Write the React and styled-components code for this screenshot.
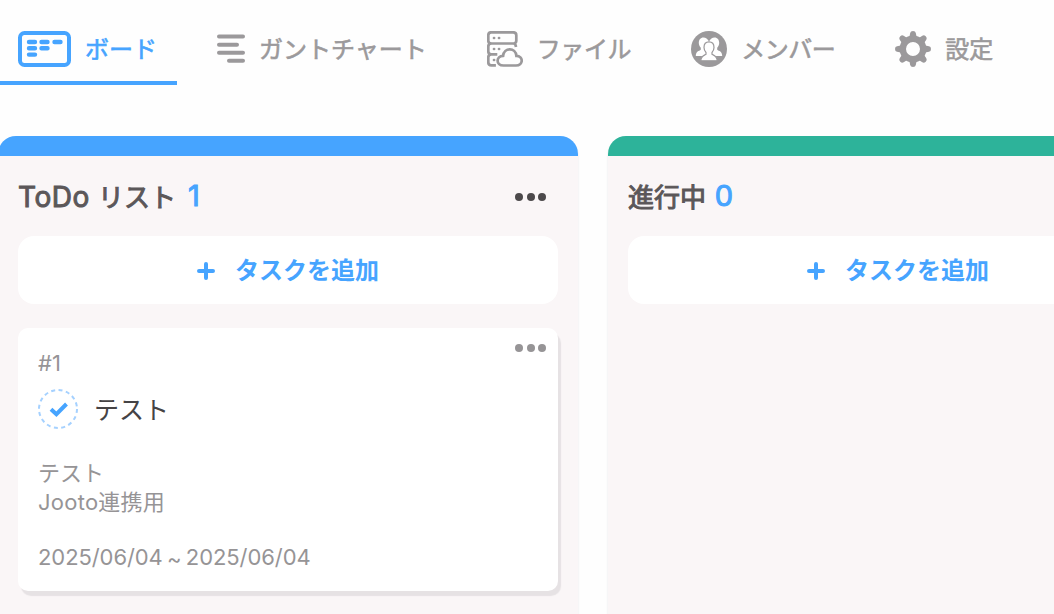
import React from 'react';
import styled, { createGlobalStyle } from 'styled-components';

const GlobalStyle = createGlobalStyle`
  * {
    box-sizing: border-box;
  }

  body {
    margin: 0;
    background: #fefefe;
    color: #5b5759;
    font-family: Inter, 'Noto Sans CJK JP', sans-serif;
    overflow: hidden;
  }

  svg {
    display: block;
    flex: none;
  }
`;

const Page = styled.div`
  width: 100%;
  height: 614px;
  overflow: hidden;
`;

const Tabs = styled.nav`
  display: flex;
  gap: 20px;
  height: 85px;
`;

const Tab = styled.a`
  display: flex;
  align-items: center;
  flex: none;
  gap: 14px;
  height: 85px;
  padding: 17px 20px 0 ${props => (props.$active ? '18px' : '20px')};
  border-bottom: 4px solid ${props => (props.$active ? '#46a4ff' : 'transparent')};
  color: ${props => (props.$active ? '#46a4ff' : '#9b999b')};
`;

const TabLabel = styled.span`
  padding-top: 1px;
  font-size: 24px;
  line-height: 36px;
  -webkit-text-stroke: 0.6px currentColor;
  white-space: nowrap;
  letter-spacing: ${props => props.$spacing || '0'};
`;

const Board = styled.main`
  display: flex;
  gap: 30px;
  margin: 51px 0 0 -2px;
`;

const Column = styled.section`
  flex: none;
  width: 580px;
  height: 500px;
  border-top: 20px solid ${props => props.$color};
  border-radius: 18px 18px 0 0;
  background: #faf6f7;
  box-shadow: 0 2px 2px rgba(60, 50, 80, 0.16);
  padding: 0 20px;
`;

const ColumnHeader = styled.header`
  display: flex;
  align-items: center;
  height: 80px;
  padding: 2px 12px 0 0;
`;

const ColumnTitle = styled.h2`
  margin: 1px 0 0;
  font-size: 26px;
  line-height: 36px;
  font-weight: 400;
  -webkit-text-stroke: 1px currentColor;
  white-space: pre;
`;

const TitleLatin = styled.span`
  margin-right: 1px;
  font-size: 28px;
  letter-spacing: 0.5px;
`;

const Count = styled.span`
  min-width: 20px;
  margin: -2px 0 0 8px;
  font-size: 29px;
  line-height: 36px;
  text-align: center;
  color: #46a4ff;
  -webkit-text-stroke: 1px currentColor;
`;

const Menu = styled.button`
  display: flex;
  gap: 3.5px;
  margin-left: auto;
  padding: 0;
  border: none;
  background: none;
  color: ${props => props.$color};
`;

const Dot = styled.span`
  width: 8px;
  height: 8px;
  border-radius: 50%;
  background: currentColor;
`;

const AddButton = styled.button`
  display: flex;
  align-items: center;
  justify-content: center;
  gap: 20px;
  width: 540px;
  height: 68px;
  padding: 0;
  border: none;
  border-radius: 16px;
  background: #fff;
  color: #46a4ff;
  font-family: inherit;
  font-size: 24px;
  font-weight: 700;

  svg {
    margin-top: 2px;
  }
`;

const AddLabel = styled.span`
  padding-bottom: 3px;
`;

const Card = styled.article`
  width: 540px;
  height: 263px;
  margin-top: 24px;
  padding: 16px 12px 0 20px;
  border-radius: 10px;
  background: #fff;
  box-shadow: 3px 5px 1px #e6e2e4;
  color: #969496;
  font-size: 22px;
`;

const CardTop = styled.div`
  display: flex;
  align-items: flex-start;
  height: 45px;
`;

const CardNumber = styled.span`
  margin-top: 4px;
  line-height: 30px;
`;

const CardTitle = styled.h3`
  display: flex;
  align-items: center;
  gap: 16px;
  height: 40px;
  margin: 0;
  color: #454345;
  font-size: 25px;
  font-weight: 400;
`;

const CardTitleLabel = styled.span`
  padding-bottom: 3px;
`;

const CardText = styled.p`
  margin: 30px 0 0;
  line-height: 29px;
`;

const ProjectName = styled.span`
  letter-spacing: 0.25px;
`;

const CardDates = styled.p`
  margin: 25px 0 0;
  line-height: 30px;
  letter-spacing: -0.08px;
  word-spacing: -1.8px;
`;

const Tilde = styled.span`
  vertical-align: -2px;
  line-height: 1;
`;

const BoardIcon = () => (
  <svg width="53" height="36" viewBox="0 0 53 36" fill="none" stroke="currentColor">
    <rect x="2" y="2" width="49" height="32" rx="4.5" strokeWidth="4" />
    <path
      d="M11 11h6M23.5 11h6M36.5 11h6M11 17.3h6M23.5 17.3h6M11 23.6h6"
      strokeWidth="4.4"
      strokeLinecap="round"
    />
  </svg>
);

const GanttIcon = () => (
  <svg width="28" height="36" viewBox="0 0 28 36" fill="none" stroke="currentColor">
    <path d="M2 5.5h24M2 13.7h18M2 21.7h24M12 29.8h14" strokeWidth="4" strokeLinecap="round" />
  </svg>
);

const FileIcon = () => (
  <svg width="36" height="36" viewBox="0 0 36 36" fill="none" stroke="currentColor" strokeWidth="2.7">
    <path d="M29 16C28.8 14 28.4 13 27 12.5c1.400-.4 2.300-1.300 2.300-2.800V4.300c0-2-1-3-3-3H4.300c-2 0-3 1-3 3v5.400c0 1.800 1 2.800 3 2.800H27" />
    <path d="M4.300 12.500c-2 0-3 1-3 3v5c0 1.800 1 2.800 3 2.800h6M4.300 23.300c-2 0-3 1-3 3v5c0 2 1 3 3 3h4.600" />
    <path d="M16.500 34.500c-8 0-7.600-9.500-.4-9.700.8-8.700 12.600-8.700 13.300.1 7.100 0 7.200 9.600-.4 9.600z" />
    <path d="M7 7h.1M12 7h.1M7 18h.1M12 18h.1M7 29h.1" strokeLinecap="round" />
  </svg>
);

const MemberIcon = () => (
  <svg width="36" height="36" viewBox="0 0 36 36">
    <circle cx="18" cy="18" r="18" fill="currentColor" />
    <path
      d="M12.500 6.500c-3 0-4.700 2.300-4.700 5.300 0 2 .8 3.700 2 4.900v2.100C8 20.200 4.800 20.300 4.800 25h26.400c0-4.700-3.200-4.800-5-6.200v-2.100c1.200-1.200 2-2.900 2-4.900 0-3-1.700-5.300-4.700-5.300-2.300 0-4 1.500-5.500 4-1.500-2.500-3.200-4-5.500-4z"
      fill="#fff"
    />
    <path
      d="M18 10.900c-3.300 0-5 2.500-5 5.700 0 2 .8 3.700 2 4.900v1.800c-2.200 1.200-5.200 1.600-5.200 6.500h16.400c0-4.900-3-5.300-5.200-6.500v-1.800c1.200-1.200 2-2.900 2-4.900 0-3.200-1.700-5.700-5-5.700z"
      fill="#fff"
      stroke="currentColor"
      strokeWidth="1.200"
    />
  </svg>
);

const TOOTH_ANGLES = [0, 45, 90, 135, 180, 225, 270, 315];

const GearIcon = () => (
  <svg width="36" height="36" viewBox="0 0 36 36">
    <g fill="currentColor">
      {TOOTH_ANGLES.map(angle => (
        <path
          key={angle}
          d="M15.200 2Q15.500 0 18 0t2.800 2L22 8h-8z"
          transform={`rotate(${angle} 18 18)`}
        />
      ))}
    </g>
    <circle cx="18" cy="18" r="10.200" fill="none" stroke="currentColor" strokeWidth="6.400" />
  </svg>
);

const PlusIcon = () => (
  <svg width="18" height="18" viewBox="0 0 18 18" fill="none" stroke="currentColor">
    <path d="M9 2v14M2 9h14" strokeWidth="4" strokeLinecap="round" />
  </svg>
);

const CheckIcon = () => (
  <svg width="40" height="40" viewBox="0 0 40 40" fill="none">
    <circle cx="20" cy="20" r="19" stroke="#a5d1ff" strokeWidth="2" strokeDasharray="4 3.460" />
    <path d="M13 20.200l5.400 5L28.500 15" stroke="#46a4ff" strokeWidth="4" />
  </svg>
);

const TABS = [
  { label: 'ボード', icon: <BoardIcon />, active: true },
  { label: 'ガントチャート', icon: <GanttIcon /> },
  { label: 'ファイル', icon: <FileIcon />, spacing: '-0.4px' },
  { label: 'メンバー', icon: <MemberIcon />, spacing: '-0.5px' },
  { label: '設定', icon: <GearIcon /> }
];

const MenuButton = ({ color }) => (
  <Menu $color={color}>
    <Dot />
    <Dot />
    <Dot />
  </Menu>
);

const TaskCard = () => (
  <Card>
    <CardTop>
      <CardNumber>#1</CardNumber>
      <MenuButton color="#969496" />
    </CardTop>
    <CardTitle>
      <CheckIcon />
      <CardTitleLabel>テスト</CardTitleLabel>
    </CardTitle>
    <CardText>
      テスト
      <br />
      <ProjectName>Jooto連携用</ProjectName>
    </CardText>
    <CardDates>
      2025/06/04 <Tilde>~</Tilde> 2025/06/04
    </CardDates>
  </Card>
);

const TaskColumn = ({ color, title, count, children }) => (
  <Column $color={color}>
    <ColumnHeader>
      <ColumnTitle>{title}</ColumnTitle>
      <Count>{count}</Count>
      <MenuButton color="#4c494b" />
    </ColumnHeader>
    <AddButton>
      <PlusIcon />
      <AddLabel>タスクを追加</AddLabel>
    </AddButton>
    {children}
  </Column>
);

const App = () => {
  return (
    <Page>
      <GlobalStyle />
      <Tabs>
        {TABS.map(tab => (
          <Tab key={tab.label} $active={tab.active}>
            {tab.icon}
            <TabLabel $spacing={tab.spacing}>{tab.label}</TabLabel>
          </Tab>
        ))}
      </Tabs>
      <Board>
        <TaskColumn color="#46a4ff" title={<><TitleLatin>ToDo</TitleLatin> リスト</>} count={1}>
          <TaskCard />
        </TaskColumn>
        <TaskColumn color="#2db39a" title="進行中" count={0} />
      </Board>
    </Page>
  );
};

export default App;
